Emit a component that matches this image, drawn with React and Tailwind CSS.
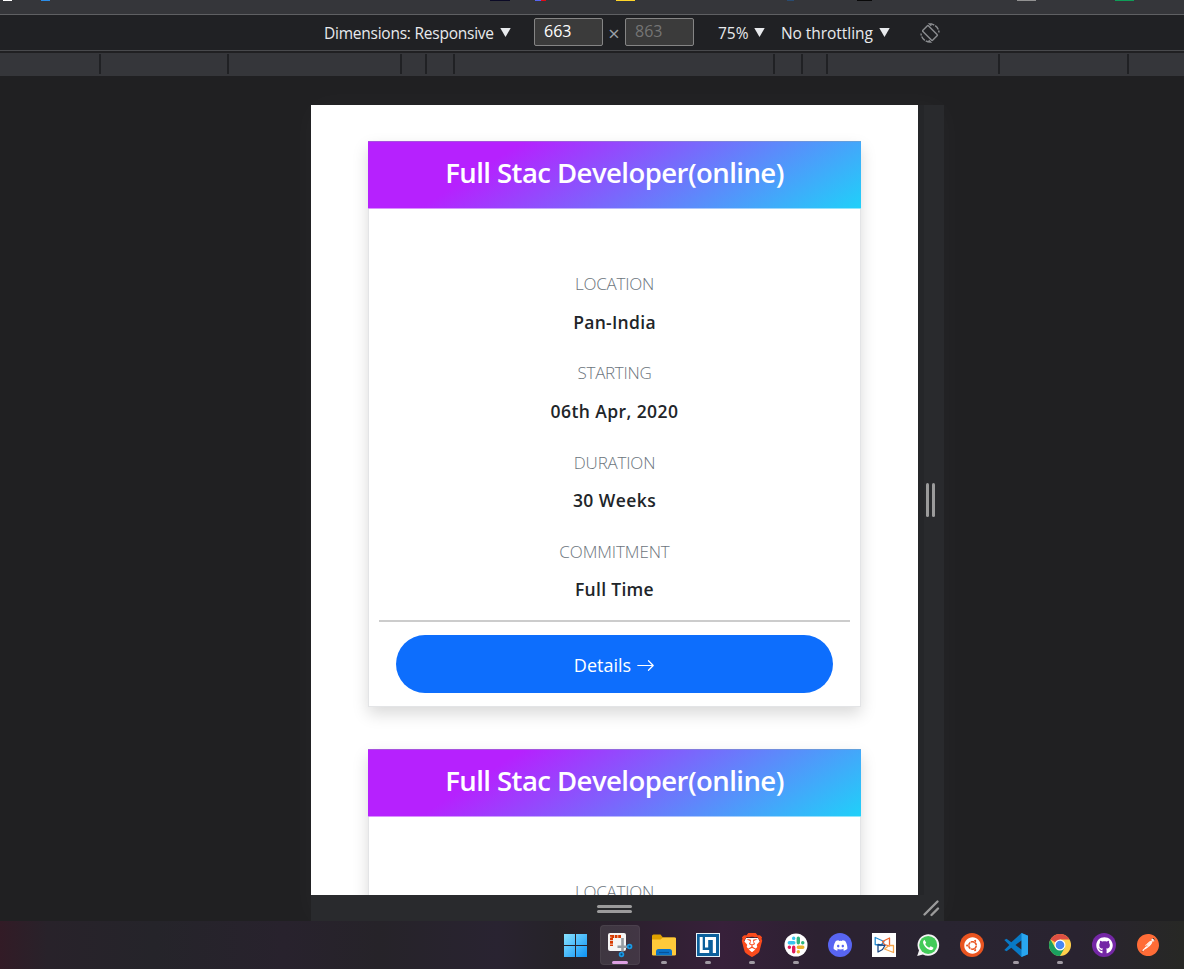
import React from "react";
import { BsArrowRight } from "react-icons/bs";
import { FaDiscord, FaUbuntu, FaGithub } from "react-icons/fa";
import { SiBrave, SiPostman } from "react-icons/si";

const details = [
  ["LOCATION", "Pan-India", "tracking-[-0.25px]", "tracking-[0.3px]"],
  ["STARTING", "06th Apr, 2020", "tracking-[-0.3px]", "tracking-[0.42px]"],
  ["DURATION", "30 Weeks", "tracking-[-0.2px]", "tracking-[0.42px]"],
  ["COMMITMENT", "Full Time", "tracking-[-0.1px]", "tracking-[0.3px]"],
];

function CourseCard() {
  return (
    <article className="h-[566px] w-[493px] shrink-0 border border-[#e3e4e6] bg-white text-center shadow-[0_7px_15px_rgba(0,0,0,0.15)]">
      <header className="-mx-px -mt-px h-[68px] border-t border-b border-t-[#8f9bb0]/40 border-b-white/50 bg-[linear-gradient(147deg,#b621fe_0%,#b621fe_26%,#1fd1f9_100%)] bg-origin-border pt-[10px] text-[27.5px] leading-[42px] font-semibold tracking-[-0.55px] whitespace-nowrap text-white">
        Full Stac Developer(online)
      </header>
      <dl className="pt-[61px]">
        {details.map(([label, value, lt, vt]) => (
          <div key={label} className="h-[89.3px]">
            <dt className={"h-[37.5px] text-[17px] leading-[28px] [font-weight:350] text-[#6c757d] " + lt}>{label}</dt>
            <dd className={"text-[17.5px] leading-[28px] font-semibold text-[#212529] " + vt}>{value}</dd>
          </div>
        ))}
      </dl>
      <div className="mx-[10px] -mt-[7px] h-[2px] bg-[#cccccc]" />
      <button className="mx-auto mt-[13px] flex h-[58px] w-[437px] items-center justify-center gap-[5px] rounded-full bg-[#0d6efd] pt-[3px] text-[18px] text-white">
        Details <BsArrowRight size={19} />
      </button>
    </article>
  );
}

function Caret() {
  return (
    <svg className="-mt-[1px] shrink-0" width="11" height="9" viewBox="0 0 11 9">
      <path d="M.3 0h10.4L5.5 9z" fill="#e8eaed" />
    </svg>
  );
}

function Toolbar() {
  return (
    <div className="flex h-[37px] items-center border-t border-b border-t-[#5f6063] border-b-[#494a4d] bg-[#202124] pl-[324px] text-[15.5px] leading-5 whitespace-nowrap text-[#e8eaed]">
      <span className="w-[176px] tracking-[-0.24px]">Dimensions: Responsive</span>
      <Caret />
      <span className="mt-[-2px] ml-[23px] h-[28px] w-[69px] rounded-[2px] border border-[#858585] bg-[#3b3b3b] pl-[9px] text-[16px] leading-[25px] text-white">663</span>
      <span className="w-[22px] pt-[2px] text-center text-[20px] text-[#9aa0a6]">×</span>
      <span className="mt-[-2px] h-[28px] w-[69px] rounded-[2px] border border-[#858585] bg-[#3b3b3b] pl-[9px] text-[16px] leading-[25px] text-[#757575]">863</span>
      <span className="ml-[24px] w-[36px]">75%</span>
      <Caret />
      <span className="ml-[16px] w-[98px] tracking-[-0.05px]">No throttling</span>
      <Caret />
      <svg className="ml-[30px]" width="20" height="20" viewBox="0 0 20 20" fill="none" stroke="#8b8d90" strokeWidth="1.4">
        <rect x="6" y="3" width="8" height="14" rx="1" transform="rotate(-45 10 10)" />
        <path d="M9.5 .9A9.2 9.2 0 0 1 19 9.5M12 .9 9.5.9l2 2M10.5 19.1A9.2 9.2 0 0 1 1 10.5M8 19.1h2.5l-2-2" strokeDasharray="5 1" />
      </svg>
    </div>
  );
}

const topMarks = [
  [3, 9, "#ffffff"], [41, 9, "#2c8de8"], [490, 20, "#0b0a26"], [535, 6, "#5865f2"], [541, 5, "#e00b16"],
  [616, 19, "#ffd629"], [787, 7, "#294b70"], [857, 15, "#090909"], [1017, 19, "#929292"], [1115, 19, "#0f9d58"],
];
const ticks = [99, 227, 400, 425, 453, 773, 801, 826, 998, 1127];

function WindowsIcon() {
  return (
    <svg width="24" height="24" viewBox="0 0 24 24">
      <defs>
        <linearGradient id="win" x1="0" y1="0" x2="24" y2="24" gradientUnits="userSpaceOnUse">
          <stop stopColor="#8be4ff" /><stop offset="1" stopColor="#0a91f5" />
        </linearGradient>
      </defs>
      <path fill="url(#win)" d="M0 1h11v11H0zM12 1h11v11H12zM0 13h11v11H0zM12 13h11v11H12z" />
    </svg>
  );
}

function SnipIcon() {
  return (
    <svg width="26" height="26" viewBox="0 0 26 26">
      <rect x="1" y="1" width="18" height="18" rx="2" fill="#f5f5f5" />
      <path d="M14 4.500H4.500V14" fill="none" stroke="#d83b01" strokeWidth="3" strokeDasharray="2.800 .700" />
      <path d="M15.500 6v13.500M10.500 14.800H21" stroke="#969ca2" strokeWidth="2.600" />
      <circle cx="22.600" cy="14.600" r="1.900" fill="#114c78" stroke="#1a9ae5" strokeWidth="1.700" />
      <circle cx="14.500" cy="22.400" r="1.900" fill="#114c78" stroke="#1a9ae5" strokeWidth="1.700" />
    </svg>
  );
}

function FolderIcon() {
  return (
    <svg width="24" height="24" viewBox="0 0 24 24">
      <path d="M0 3q0-1.500 1.500-1.500h7L11 4.500h11q2 0 2 2V22H0z" fill="#dfa000" />
      <path d="M0 6.500h8.500L11 4.500h12q1 0 1 1V21q0 1.500-1.500 1.500h-21Q0 22.500 0 21z" fill="#ffca3a" />
      <path d="M4 22.500v-4Q4 16 6.500 16h11q2.500 0 2.500 2.500v4z" fill="#0a73c9" />
      <path d="M7 19.500h10" stroke="#075298" strokeWidth="1.200" />
    </svg>
  );
}

function LtIcon() {
  return (
    <svg width="24" height="24" viewBox="0 0 24 24">
      <path d="M0 0h24v24H0z" fill="#e8f3f9" />
      <path d="M1 1h22v22H1z" fill="#0c609c" />
      <path d="M3.700 4h3v13h6.500v3H3.700zM9 4h11v16h-3.200V7h-4.600v7.500H9z" fill="#fff" />
    </svg>
  );
}

function BraveIcon() {
  return (
    <span className="relative flex h-6 w-6 items-center justify-center">
      <svg className="absolute" width="24" height="24" viewBox="0 0 24 24"><path d="M6 5h12l2 4-3 9-5 4-5-4-3-9z" fill="#fff" /></svg>
      <SiBrave className="relative" size={24} color="#fb4b1d" />
    </span>
  );
}

function SlackIcon() {
  return (
    <svg width="24" height="24" viewBox="0 0 24 24">
      <circle cx="12" cy="12" r="11.500" fill="#fff" />
      <g strokeWidth="3.400" strokeLinecap="round">
        <path d="M5.300 9.700h4.500M9.700 5.300v.1" stroke="#36c5f0" />
        <path d="M14.300 5.300v4.500M18.700 9.700h.1" stroke="#2eb67d" />
        <path d="M14.300 14.300h4.500M14.300 18.700v.1" stroke="#ecb22e" />
        <path d="M9.700 14.300v4.500M5.300 14.300h.1" stroke="#e01e5a" />
      </g>
    </svg>
  );
}

function MeshIcon() {
  return (
    <svg width="24" height="24" viewBox="0 0 24 24" fill="none" strokeWidth="1.300" strokeLinejoin="round">
      <path d="M0 0h24v24H0z" fill="#fff" />
      <path d="M3.200 4.500 12 8.500 9 12.500l-5.800-1z" stroke="#238bd0" />
      <path d="M10.500 8.500 17.500 5v8l-5-1.500z" stroke="#ef642d" />
      <path d="M6 19v-7.500l7 1-2.500 4z" stroke="#194783" />
      <path d="M12.500 16 17 12.500h4.500v7z" stroke="#f6a64b" />
    </svg>
  );
}

function WhatsIcon() {
  return (
    <svg width="24" height="24" viewBox="0 0 24 24">
      <path d="M1.200 23 3 17.500a10.800 10.800 0 1 1 3.900 3.900z" fill="#f4f4f4" />
      <circle cx="12.200" cy="11.900" r="9" fill="#42cb59" />
      <path d="M8.500 6.800c-1.700 1-1.800 2.900-.8 4.700 1.300 2.500 3.100 4.300 5.700 5.300 2 .8 3.800 0 4.100-2.100l-2.900-1.500-1.400 1.500c-1.800-.7-3.100-1.900-4-3.700l1-1.300z" fill="#fff" />
    </svg>
  );
}

function CodeIcon() {
  return (
    <svg width="24" height="24" viewBox="0 0 24 24">
      <path d="M17.500 0 24 2.800v18.400L17.500 24 7.300 14.700 2.500 18.300.3 16.900 5.300 12 .3 7.100 2.500 5.700l4.800 3.600zM17.800 7.200 11.500 12l6.300 4.800z" fill="#0879c5" fillRule="evenodd" />
      <path d="M17.500 0 24 2.800v18.400L17.500 24z" fill="#29a6ef" />
    </svg>
  );
}

function ChromeIcon() {
  return (
    <svg width="24" height="24" viewBox="0 0 24 24">
      <circle cx="12" cy="12" r="11" fill="#ffd04c" />
      <path d="M12 12 2.470 6.500A11 11 0 0 1 21.530 6.500H12z" fill="#dd4f43" />
      <path d="M2.470 6.500A11 11 0 0 0 12 23l4.760-8.250L12 12 7.240 14.750z" fill="#1aa15f" />
      <circle cx="12" cy="12" r="5.500" fill="#fff" />
      <circle cx="12" cy="12" r="4.300" fill="#4787f3" />
    </svg>
  );
}

const disc = "flex h-6 w-6 items-center justify-center rounded-full ";
const apps = [
  [<WindowsIcon />, "none"],
  [<SnipIcon />, "active"],
  [<FolderIcon />, "open"],
  [<LtIcon />, "open"],
  [<BraveIcon />, "open"],
  [<SlackIcon />, "open"],
  [<span className={disc + "bg-[#5865f2]"}><FaDiscord size={15} color="#fff" /></span>, "none"],
  [<MeshIcon />, "none"],
  [<WhatsIcon />, "none"],
  [<span className={disc + "bg-[#e95420]"}><FaUbuntu size={17} color="#fff" /></span>, "none"],
  [<CodeIcon />, "open"],
  [<ChromeIcon />, "open"],
  [<span className={disc + "bg-[#7427a5]"}><FaGithub size={17} color="#fff" /></span>, "none"],
  [<span className={disc + "relative"}><span className="absolute h-4 w-4 rounded-full bg-white" /><SiPostman className="relative" size={22} color="#ff6c37" /></span>, "none"],
];

function Taskbar() {
  return (
    <footer className="flex h-[48px] shrink-0 gap-1 bg-[linear-gradient(90deg,#321b26_0%,#28222a_4%,#25242a_13%,#28222d_24%,#262329_32%,#292331_42%,#262329_47%,#2c202e_53%,#37203a_61%,#2c2131_69%,#292431_79%,#292330_91%,#272825_100%)] pt-1 pl-[556px]">
      {apps.map(([icon, state], i) => (
        <div key={i} className={"relative flex h-10 w-10 shrink-0 items-center justify-center rounded-[4px] " + (state === "active" ? "border border-white/5 bg-white/10" : "")}>
          {icon}
          {state === "active" && <span className="absolute bottom-0 h-[3px] w-4 rounded-full bg-[#dda0e3]" />}
          {state === "open" && <span className="absolute bottom-px h-[3px] w-[6px] rounded-full bg-[#a09aa3]" />}
        </div>
      ))}
    </footer>
  );
}

export default function App() {
  return (
    <div className="flex h-[969px] w-[1184px] flex-col overflow-hidden bg-[#202022] font-['Open_Sans','Noto_Sans',sans-serif]">
      <div className="relative h-[14px] shrink-0 bg-[#35363a]">
        {topMarks.map(([x, w, c]) => (
          <span key={x} className="absolute top-0 h-px" style={{ left: x, width: w, background: c }} />
        ))}
      </div>
      <Toolbar />
      <div className="relative mt-[2px] h-[23px] shrink-0 bg-[#35363a]">
        {ticks.map((x) => (
          <span key={x} className="absolute top-px h-5 w-[2px] bg-[#202124]" style={{ left: x }} />
        ))}
      </div>
      <main className="mt-[29px] ml-[311px] grid h-[816px] w-[633px] shrink-0 grid-cols-[607px_26px] grid-rows-[790px_26px] bg-[#292a2d] shadow-[0_0_30px_rgba(255,255,255,0.03)]">
        <section className="flex flex-col items-center gap-[42px] overflow-hidden bg-white pt-[36px]">
          <CourseCard />
          <CourseCard />
        </section>
        <div className="flex items-center justify-center gap-[3px] border-l-[6px] border-[#252629] pr-[7px]">
          <span className="h-[34px] w-[3px] rounded-full bg-[#9b9b9b]" />
          <span className="h-[34px] w-[3px] rounded-full bg-[#9b9b9b]" />
        </div>
        <div className="flex flex-col items-center justify-center gap-[2px] pt-[2px]">
          <span className="h-[3px] w-[35px] rounded-full bg-[#9b9b9b]" />
          <span className="h-[3px] w-[35px] rounded-full bg-[#9b9b9b]" />
        </div>
        <svg width="26" height="26" viewBox="0 0 26 26" stroke="#9b9b9b" strokeWidth="2.400" strokeLinecap="round">
          <path d="m6.500 19.500 13-13M13.500 20l6.500-6.500" />
        </svg>
      </main>
      <Taskbar />
    </div>
  );
}
